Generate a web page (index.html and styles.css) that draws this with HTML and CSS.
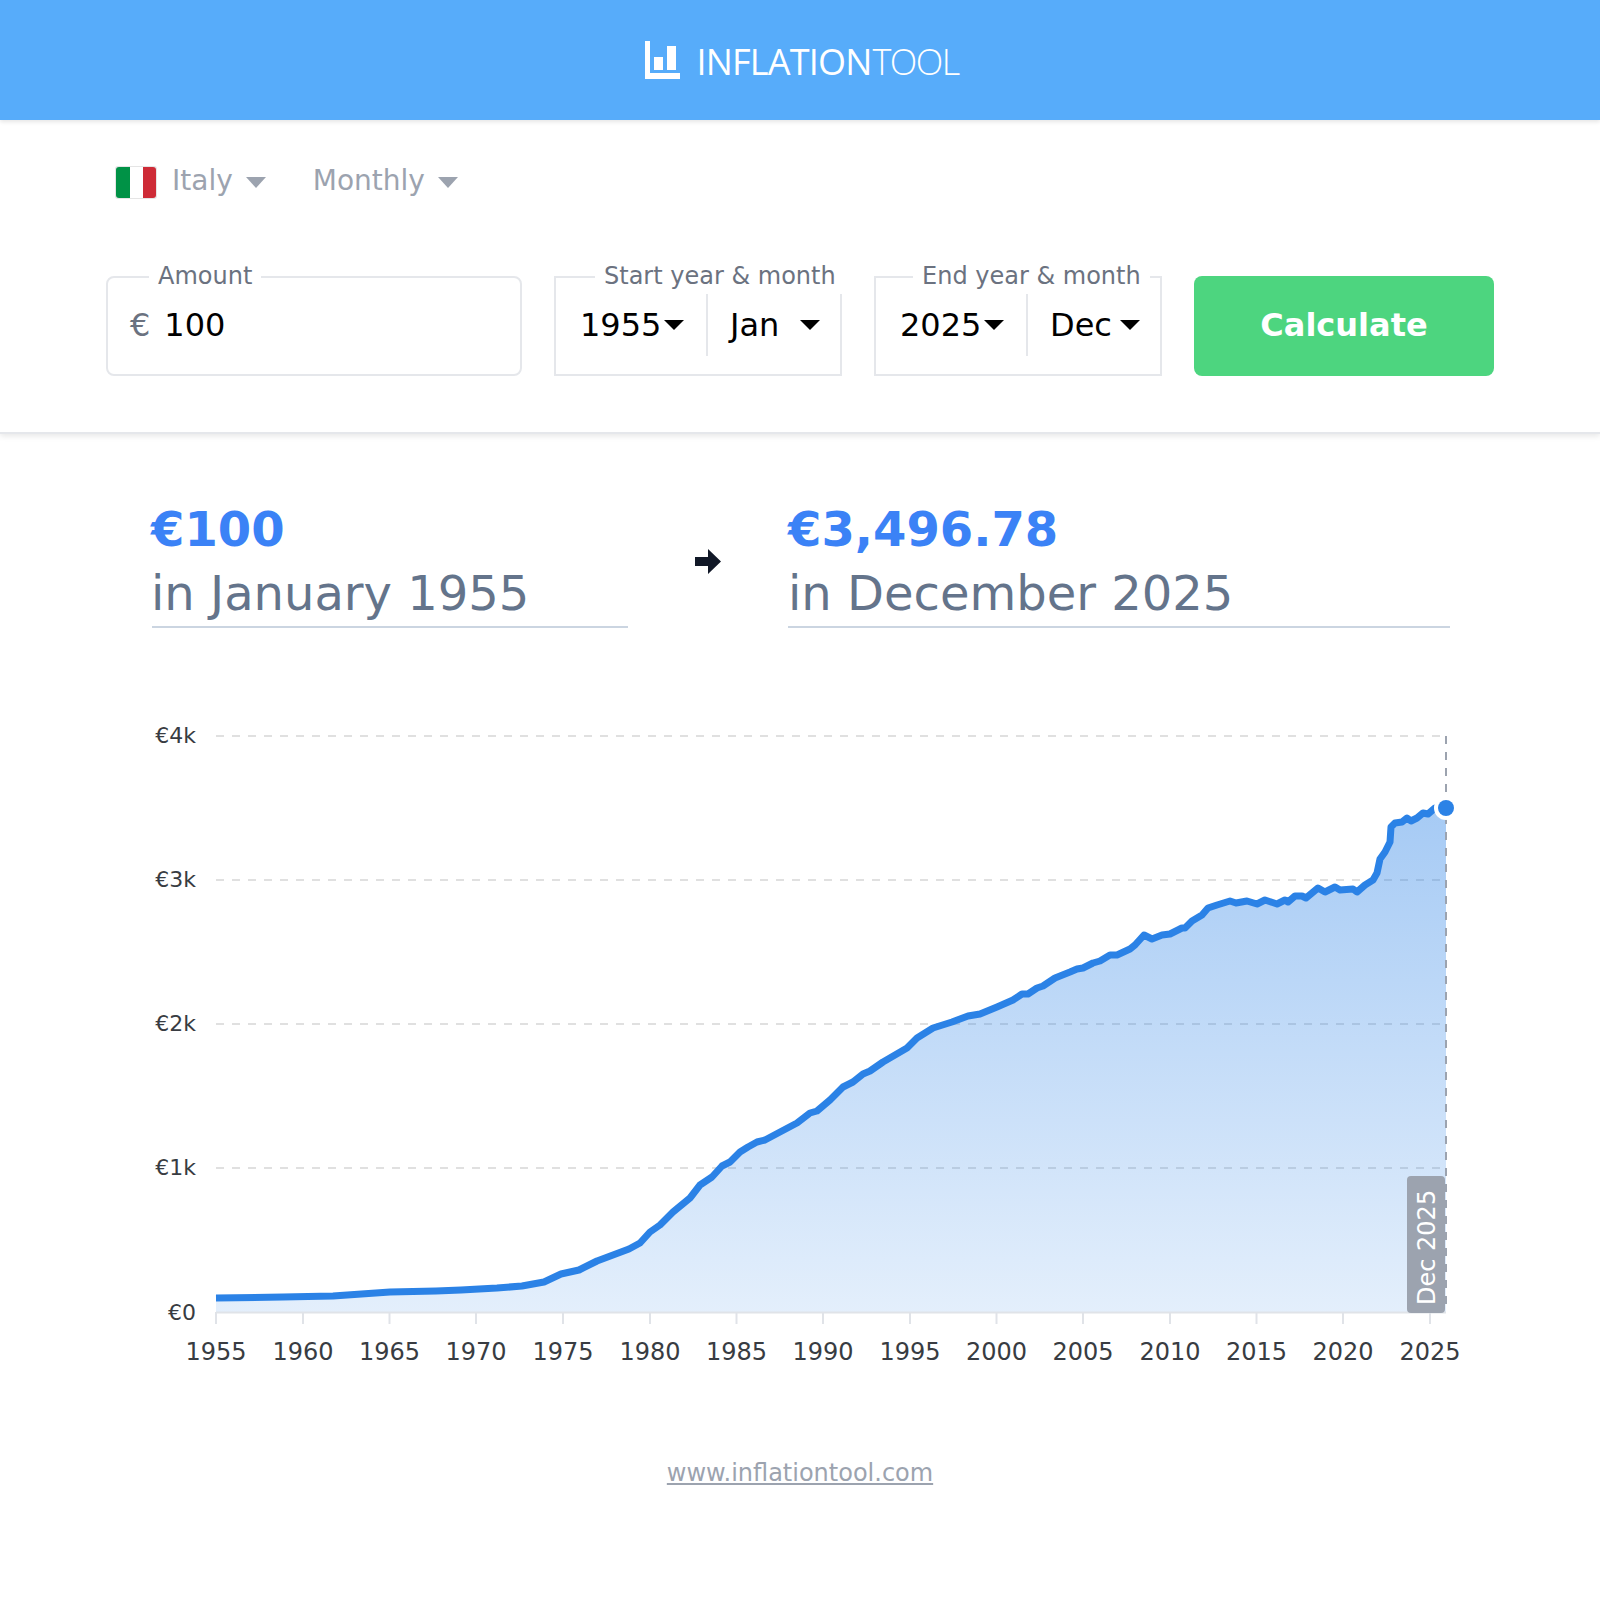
FILE: index.html
```html
<!DOCTYPE html>
<html lang="en">
<head>
    <meta charset="UTF-8">
    <meta name="viewport" content="width=device-width, initial-scale=1.0">
    <title>Inflation Tool</title>
    <link rel="stylesheet" href="styles.css">
</head>
<body>

    <header class="topbar">
        <a class="logo" href="#">
            <svg class="logo-icon" viewBox="0 0 35 38" width="35" height="38">
                <path d="M0 0h5v32h30v6H0z" fill="#fff"/>
                <rect x="9" y="16" width="9" height="13" fill="#fff"/>
                <rect x="22" y="5" width="9" height="24" fill="#fff"/>
            </svg>
            <span class="logo-text">INFLATION<span class="logo-light">TOOL</span></span>
        </a>
    </header>

    <section class="controls">
        <div class="pickers">
            <div class="picker">
                <svg class="flag" viewBox="0 0 42 33" width="42" height="33">
                    <rect width="42" height="33" rx="3" fill="#e5e5e5"/>
                    <path d="M1 4a3 3 0 0 1 3-3h11v31H4a3 3 0 0 1-3-3z" fill="#009246"/>
                    <rect x="15" y="1" width="13" height="31" fill="#fff"/>
                    <path d="M28 1h10a3 3 0 0 1 3 3v25a3 3 0 0 1-3 3H28z" fill="#ce2b37"/>
                </svg>
                <span>Italy</span>
                <i class="caret caret-grey"></i>
            </div>
            <div class="picker">
                <span>Monthly</span>
                <i class="caret caret-grey"></i>
            </div>
        </div>

        <form class="calc-form">
            <fieldset class="field field-amount">
                <legend>Amount</legend>
                <div class="amount">
                    <span class="currency">€</span>
                    <span>100</span>
                </div>
            </fieldset>

            <fieldset class="field field-date field-start">
                <legend>Start year &amp; month</legend>
                <div class="date-row">
                    <div class="date-year"><span>1955</span><i class="caret"></i></div>
                    <div class="date-month"><span>Jan</span><i class="caret"></i></div>
                </div>
            </fieldset>

            <fieldset class="field field-date field-end">
                <legend>End year &amp; month</legend>
                <div class="date-row">
                    <div class="date-year"><span>2025</span><i class="caret"></i></div>
                    <div class="date-month"><span>Dec</span><i class="caret"></i></div>
                </div>
            </fieldset>

            <button class="calc-btn" type="button">Calculate</button>
        </form>
    </section>

    <section class="summary">
        <div class="summary-block summary-from">
            <div class="summary-value">€100</div>
            <div class="summary-date">in January 1955</div>
        </div>
        <div class="summary-arrow">
            <svg viewBox="0 0 26 25" width="26" height="25">
                <path d="M0 8h13V0l13 12.5L13 25v-8H0z" fill="#111827"/>
            </svg>
        </div>
        <div class="summary-block summary-to">
            <div class="summary-value">€3,496.78</div>
            <div class="summary-date">in December 2025</div>
        </div>
    </section>

    <svg class="chart" viewBox="0 700 1600 700" width="1600" height="700">
        <defs>
            <linearGradient id="areaFill" x1="0" y1="0" x2="0" y2="1">
                <stop offset="0" stop-color="#2b82e6" stop-opacity="0.42"/>
                <stop offset="1" stop-color="#2b82e6" stop-opacity="0.13"/>
            </linearGradient>
        </defs>

        <!-- grille -->
        <g class="grid">
            <line x1="216" x2="1446" y1="736" y2="736"/>
            <line x1="216" x2="1446" y1="880" y2="880"/>
            <line x1="216" x2="1446" y1="1024" y2="1024"/>
            <line x1="216" x2="1446" y1="1168" y2="1168"/>
        </g>

        <g class="y-labels">
            <text x="196" y="743">€4k</text>
            <text x="196" y="887">€3k</text>
            <text x="196" y="1031">€2k</text>
            <text x="196" y="1175">€1k</text>
            <text x="196" y="1320">€0</text>
        </g>

        <path class="area" fill="url(#areaFill)" d="M216 1298L283 1297 333 1296 390 1292 436 1291 461 1290 497 1288 522 1286 544 1282 561 1274 579 1270 597 1261 629 1249 640 1243 650 1232 660 1225 673 1212 690 1198 700 1185 712 1177 722 1166 730 1162 740 1152 748 1147 757 1142 765 1140 780 1132 797 1123 810 1113 817 1111 830 1100 843 1087 853 1082 863 1074 870 1071 883 1062 907 1048 917 1038 933 1028 952 1022 968 1016 980 1014 997 1007 1013 1000 1022 994 1028 994 1037 988 1043 986 1055 978 1070 972 1077 969 1083 968 1093 963 1100 961 1110 955 1117 955 1130 949 1135 945 1144 935 1152 939 1162 935 1170 934 1182 928 1185 928 1192 921 1202 915 1208 908 1217 905 1230 901 1236 903 1247 901 1257 904 1265 900 1277 904 1285 900 1288 902 1295 896 1302 896 1306 898 1318 888 1325 892 1335 887 1340 890 1353 889 1357 892 1365 885 1373 880 1377 873 1380 859 1385 852 1390 842 1391 827 1395 823 1402 822 1407 818 1411 821 1417 818 1423 813 1428 814 1435 808 1446 808V1312H216z"/>

        <!-- axe des x -->
        <g class="axis">
            <line x1="216" x2="1446" y1="1312.5" y2="1312.5"/>
            <line x1="216" x2="216" y1="1312" y2="1324"/>
            <line x1="303" x2="303" y1="1312" y2="1324"/>
            <line x1="389.5" x2="389.5" y1="1312" y2="1324"/>
            <line x1="476" x2="476" y1="1312" y2="1324"/>
            <line x1="563" x2="563" y1="1312" y2="1324"/>
            <line x1="650" x2="650" y1="1312" y2="1324"/>
            <line x1="736.5" x2="736.5" y1="1312" y2="1324"/>
            <line x1="823" x2="823" y1="1312" y2="1324"/>
            <line x1="910" x2="910" y1="1312" y2="1324"/>
            <line x1="996.5" x2="996.5" y1="1312" y2="1324"/>
            <line x1="1083" x2="1083" y1="1312" y2="1324"/>
            <line x1="1170" x2="1170" y1="1312" y2="1324"/>
            <line x1="1256.5" x2="1256.5" y1="1312" y2="1324"/>
            <line x1="1343" x2="1343" y1="1312" y2="1324"/>
            <line x1="1430" x2="1430" y1="1312" y2="1324"/>
        </g>

        <g class="x-labels">
            <text x="216" y="1360">1955</text>
            <text x="303" y="1360">1960</text>
            <text x="389.5" y="1360">1965</text>
            <text x="476" y="1360">1970</text>
            <text x="563" y="1360">1975</text>
            <text x="650" y="1360">1980</text>
            <text x="736.5" y="1360">1985</text>
            <text x="823" y="1360">1990</text>
            <text x="910" y="1360">1995</text>
            <text x="996.5" y="1360">2000</text>
            <text x="1083" y="1360">2005</text>
            <text x="1170" y="1360">2010</text>
            <text x="1256.5" y="1360">2015</text>
            <text x="1343" y="1360">2020</text>
            <text x="1430" y="1360">2025</text>
        </g>

        <line class="marker" x1="1446" x2="1446" y1="736" y2="1312"/>

        <polyline class="line" points="216,1298 283,1297 333,1296 390,1292 436,1291 461,1290 497,1288 522,1286 544,1282 561,1274 579,1270 597,1261 629,1249 640,1243 650,1232 660,1225 673,1212 690,1198 700,1185 712,1177 722,1166 730,1162 740,1152 748,1147 757,1142 765,1140 780,1132 797,1123 810,1113 817,1111 830,1100 843,1087 853,1082 863,1074 870,1071 883,1062 907,1048 917,1038 933,1028 952,1022 968,1016 980,1014 997,1007 1013,1000 1022,994 1028,994 1037,988 1043,986 1055,978 1070,972 1077,969 1083,968 1093,963 1100,961 1110,955 1117,955 1130,949 1135,945 1144,935 1152,939 1162,935 1170,934 1182,928 1185,928 1192,921 1202,915 1208,908 1217,905 1230,901 1236,903 1247,901 1257,904 1265,900 1277,904 1285,900 1288,902 1295,896 1302,896 1306,898 1318,888 1325,892 1335,887 1340,890 1353,889 1357,892 1365,885 1373,880 1377,873 1380,859 1385,852 1390,842 1391,827 1395,823 1402,822 1407,818 1411,821 1417,818 1423,813 1428,814 1435,808 1446,808"/>

        <circle class="dot-halo" cx="1446" cy="808" r="12"/>
        <circle class="dot" cx="1446" cy="808" r="8"/>

        <rect class="badge" x="1407" y="1176" width="38" height="137" rx="4"/>
        <text class="badge-text" transform="translate(1435 1305) rotate(-90)">Dec 2025</text>
    </svg>

    <footer class="footer">
        <a href="#">www.inflationtool.com</a>
    </footer>

</body>
</html>
```

FILE: styles.css
```css
/* Page */
body {
    margin: 0;
    font-family: 'DejaVu Sans', sans-serif;
    background-color: #fff;
}

/* Bandeau du haut */
.topbar {
    position: relative;
    height: 120px;
    display: flex;
    align-items: center;
    justify-content: center;
    background-color: #57acfa;
    box-shadow: 0 2px 4px rgba(0,0,0,0.1);
}
.logo {
    display: flex;
    align-items: center;
    gap: 16px;
    margin-left: 4px;
    color: #fff;
    text-decoration: none;
}
.logo-icon {
    display: block;
}
.logo-text {
    font-family: 'Open Sans', sans-serif;
    font-size: 36px;
    line-height: 38px;
    font-weight: 500;
    letter-spacing: -0.8px;
    margin-top: 4px;
}
.logo-light {
    font-weight: 300;
    letter-spacing: -1.6px;
    margin-left: 1px;
}

/* Formulaire */
.controls {
    padding: 46px 106px 56px;
    border-bottom: 2px solid #e5e7eb;
    box-shadow: 0 2px 6px rgba(0,0,0,0.1);
}
.pickers {
    display: flex;
    gap: 47px;
    margin-left: 9px;
    height: 33px;
}
.picker {
    display: flex;
    align-items: center;
    gap: 15px;
    font-size: 28px;
    color: #9ca3af;
}
.picker span {
    margin-right: -2px;
    margin-bottom: 4px;
}
.flag {
    display: block;
}
.caret {
    display: block;
    width: 0;
    height: 0;
    border-left: 10px solid transparent;
    border-right: 10px solid transparent;
    border-top: 10px solid #000;
}
.caret-grey {
    border-top: 11px solid #9ca3af;
    margin-top: -1px;
}

.calc-form {
    display: flex;
    align-items: flex-end;
    gap: 32px;
    margin-top: 61px;
}
.field {
    box-sizing: border-box;
    min-width: 0;
    margin: 0;
    padding: 0 0 18px;
    border: 2px solid #e5e7eb;
    font-size: 32px;
}
.field legend {
    width: max-content;
    padding: 0 9px 2px;
    font-size: 24px;
    line-height: 32px;
    color: #6b7280;
    white-space: nowrap;
}
.field-amount {
    width: 416px;
    border-radius: 8px;
}
.field-amount legend {
    margin-left: 41px;
}
.amount {
    display: flex;
    align-items: center;
    gap: 14px;
    height: 62px;
    padding-left: 22px;
}
.currency {
    color: #6b7280;
}
.field-date {
    width: 288px;
}
.field-start legend {
    margin-left: 39px;
}
.field-end legend {
    margin-left: 37px;
}
.date-row {
    display: flex;
    height: 62px;
}
.date-year,
.date-month {
    box-sizing: border-box;
    display: flex;
    align-items: center;
    justify-content: space-between;
}
.date-year {
    width: 150px;
    padding: 0 22px 0 24px;
}
.date-month {
    flex: 1;
    padding: 0 20px 0 22px;
    border-left: 2px solid #e5e7eb;
}
.calc-btn {
    width: 300px;
    height: 100px;
    border: none;
    border-radius: 8px;
    background-color: #4dd57f;
    color: #fff;
    font-family: inherit;
    font-size: 32px;
    font-weight: bold;
    line-height: 1;
    padding: 0 0 2px;
    cursor: pointer;
}

/* Resultat */
.summary {
    display: flex;
    padding: 63px 150px 0 152px;
}
.summary-block {
    padding-bottom: 1px;
    border-bottom: 2px solid #cbd5e1;
}
.summary-from {
    width: 476px;
}
.summary-to {
    flex: 1;
}
.summary-value {
    font-size: 48px;
    line-height: 64px;
    font-weight: bold;
    color: #3b82f6;
    margin-left: -1px;
}
.summary-date {
    font-size: 48px;
    line-height: 64px;
    color: #64748b;
    margin-left: -1px;
}
.summary-to .summary-value,
.summary-to .summary-date {
    margin-left: 0;
}
.summary-arrow {
    width: 160px;
    display: flex;
    align-items: center;
    justify-content: center;
    padding-bottom: 3px;
}
.summary-arrow svg {
    display: block;
}

/* Graphique */
.chart {
    display: block;
    margin-top: 72px;
}
.grid line {
    stroke: #e0e0e0;
    stroke-width: 2;
    stroke-dasharray: 8 8;
}
.y-labels text {
    font-size: 22px;
    fill: #383c42;
    text-anchor: end;
}
.x-labels text {
    font-size: 24px;
    fill: #383c42;
    text-anchor: middle;
}
.axis line {
    stroke: #e0e3e8;
    stroke-width: 2;
}
.marker {
    stroke: #9ca3af;
    stroke-width: 2;
    stroke-dasharray: 8 8;
}
.line {
    fill: none;
    stroke: #2b82e6;
    stroke-width: 7;
    stroke-linejoin: round;
}
.dot-halo {
    fill: #fff;
}
.dot {
    fill: #2b82e6;
}
.badge {
    fill: #9ca3af;
}
.badge-text {
    font-size: 24px;
    fill: #fff;
}

/* Pied de page */
.footer {
    margin-top: 59px;
    text-align: center;
    font-size: 24px;
}
.footer a {
    color: #9ca3af;
}
```
